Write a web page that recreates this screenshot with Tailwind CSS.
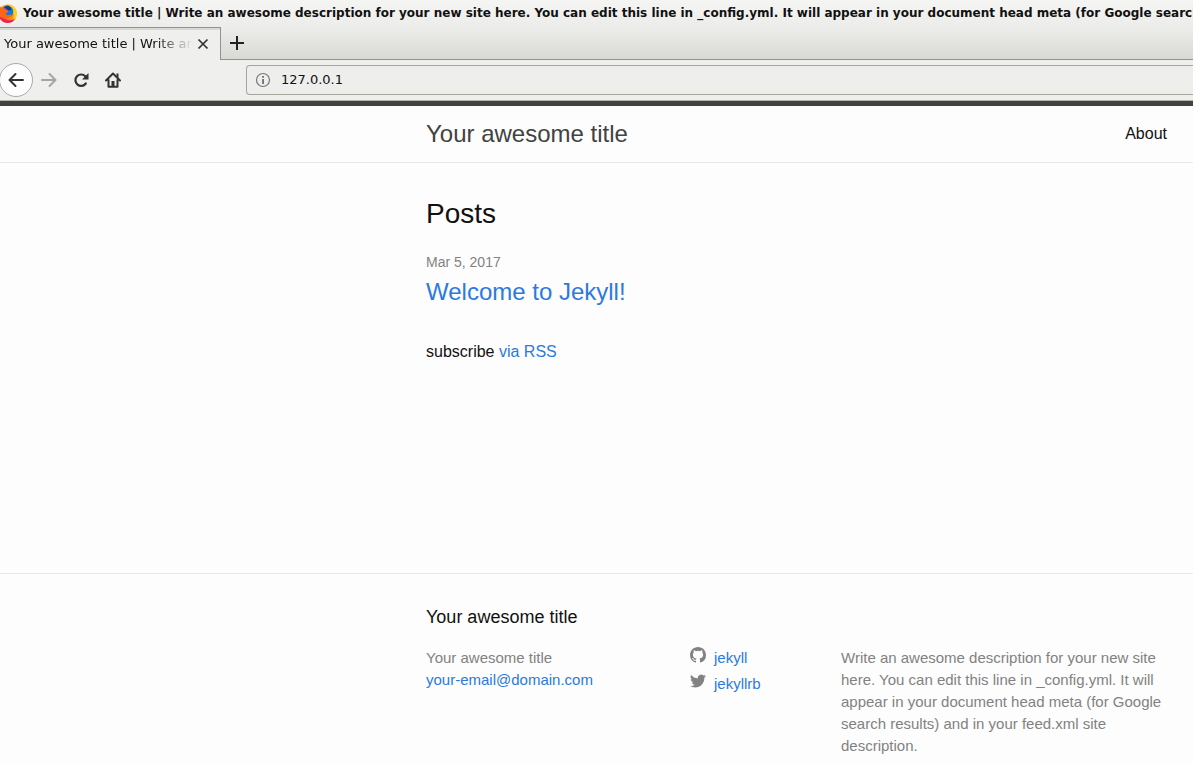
<!DOCTYPE html>
<html lang="en">
<head>
<meta charset="utf-8">
<title>Your awesome title</title>
<script src="https://cdn.jsdelivr.net/npm/@tailwindcss/browser@4"></script>
</head>
<body class="flex min-h-screen flex-col overflow-x-hidden bg-[#fdfdfd] font-['Liberation_Sans',sans-serif] text-base text-[#111]">
<div class="shrink-0 bg-[#efefee] font-['DejaVu_Sans',sans-serif] text-[#111]">
  <div class="bg-linear-to-b from-[#f5f5f4] via-[#ebebe9] to-[#d8d9d3]">
    <div class="flex h-[26px] items-center gap-1 overflow-hidden whitespace-nowrap text-xs font-bold">
      <svg class="-ml-0.5 size-[21px] shrink-0" viewBox="0 0 22 22" aria-hidden="true">
        <circle cx="10" cy="11" r="9.5" fill="#ff8b0c"/>
        <path d="M11 1c5 1 9 5 9 10 0 6-5 10-10 10 6-2 8-8 5-13-1-2-3-4-4-7z" fill="#ffcf22"/>
        <path d="M0 8c0 8 4 13 10 13 4 0 7-2 8-5-5 4-12 2-13-4l-3-8z" fill="#ee2350"/>
        <circle cx="10" cy="9" r="6" fill="#1479dc"/>
        <path d="M9 3c3 0 5 2 5 4l-3 1-2-2-3-1z" fill="#153b89"/>
        <path d="M0 10l1-8 3 4c2-1 4 0 4 1l3 1c0 2-3 2-3 3 1 3 5 1 7 1-2 4-8 6-12 3-2-2-3-3-3-5z" fill="#ff6418"/>
      </svg>
      <span>Your awesome title | Write an awesome description for your new site here. You can edit this line in _config.yml. It will appear in your document head meta (for Google search results)</span>
    </div>
    <div class="flex h-[34px] pt-px">
      <div class="flex w-[221px] items-center border-t border-r border-[#92928f] bg-[#efefee] pl-1 shadow-[inset_0_2px_0_#d9d9d7]">
        <span class="w-[189px] overflow-hidden bg-linear-to-r from-[#111] from-80% to-transparent bg-clip-text text-[13px] whitespace-nowrap text-transparent">Your awesome title | Write an</span>
        <button aria-label="Close tab" class="ml-1"><svg class="size-3" viewBox="0 0 12 12" fill="none" stroke="#333" stroke-width="1.700"><path d="M1.500 1.500l9 9M10.500 1.500l-9 9"/></svg></button>
      </div>
      <div class="flex flex-1 items-center border-b border-[#92928f] pl-2">
        <button aria-label="New tab"><svg class="size-4" viewBox="0 0 16 16" stroke="#222" stroke-width="2"><path d="M8 1v14M1 8h14"/></svg></button>
      </div>
    </div>
  </div>
  <div class="flex h-[41px] items-center border-b border-[#b4b5aa]">
    <button aria-label="Back" class="-ml-px grid size-[34px] shrink-0 place-items-center rounded-full border border-[#a9a9a4] bg-[#fdfdfd]"><svg class="size-4" viewBox="0 0 16 16" fill="none" stroke="#333" stroke-width="2" stroke-linecap="round" stroke-linejoin="round"><path d="M15 8H1.500M7.500 2l-6 6 6 6"/></svg></button>
    <button aria-label="Forward" class="ml-2"><svg class="size-4" viewBox="0 0 16 16" fill="none" stroke="#a5a5a3" stroke-width="2" stroke-linecap="round" stroke-linejoin="round"><path d="M1 8h13.500M8.500 2l6 6-6 6"/></svg></button>
    <button aria-label="Reload" class="ml-4"><svg class="size-4" viewBox="0 0 16 16"><path d="M12.800 11.500A5.700 5.700 0 1 1 12.300 4.300" fill="none" stroke="#333" stroke-width="2.200" stroke-linecap="round"/><path d="M15.500 1v6.500H9z" fill="#333"/></svg></button>
    <button aria-label="Home" class="ml-4"><svg class="size-4" viewBox="0 0 16 16"><path d="M1 8.500l7-7 7 7M3.500 8v6.800h9V8" fill="none" stroke="#333" stroke-width="2" stroke-linecap="round" stroke-linejoin="round"/><path d="M6.500 15V9h3v6zM11.500 1.500h2V6l-2-2z" fill="#333"/></svg></button>
    <div class="ml-[125px] flex h-[30px] flex-1 items-center gap-2.5 rounded-l border border-r-0 border-[#a5a69b] bg-[#eeeeec] pl-2">
      <svg class="size-4 shrink-0" viewBox="0 0 16 16"><circle cx="8" cy="8" r="6.500" fill="none" stroke="#777" stroke-width="1.200"/><path d="M7.200 7h1.700v5H7.200zM7.200 4h1.700v1.700H7.200z" fill="#666"/></svg>
      <input aria-label="Address" value="127.0.0.1" class="min-w-0 flex-1 bg-transparent text-[13px] outline-none">
    </div>
  </div>
</div>
<header class="border-t-[5px] border-b border-t-[#424242] border-b-[#e8e8e8]">
  <div class="ml-[426px] flex h-14 max-w-[741px] items-center justify-between">
    <a href="#" class="text-2xl text-[#424242]">Your awesome title</a>
    <a href="#about" class="text-base">About</a>
  </div>
</header>
<main class="ml-[426px] max-w-[741px] flex-1 pt-[30px]">
  <h1 class="text-[28px] leading-[42px]">Posts</h1>
  <div class="mt-[15px] text-sm leading-6 text-[#828282]">Mar 5, 2017</div>
  <h2 class="text-2xl leading-9"><a href="#welcome" class="text-[#2a7ae2]">Welcome to Jekyll!</a></h2>
  <p class="mt-[30px] leading-6">subscribe <a href="#rss" class="text-[#2a7ae2]">via RSS</a></p>
</main>
<footer class="border-t border-[#e8e8e8] pt-[30px] pb-[7px]">
  <div class="ml-[426px] max-w-[741px]">
    <h2 class="mb-4 text-lg leading-[27px]">Your awesome title</h2>
    <div class="flex text-[15px] leading-[22px] text-[#828282]">
      <div class="w-[264px]">Your awesome title<br><a href="mailto:your-email@domain.com" class="text-[#2a7ae2]">your-email@domain.com</a></div>
      <ul class="flex w-[151px] flex-col gap-1">
        <li><a href="#github" class="flex gap-2 text-[#2a7ae2]"><svg class="size-4" viewBox="0 0 16 16" fill="#828282"><path d="M8 0C3.580 0 0 3.580 0 8c0 3.540 2.290 6.530 5.470 7.590.4.070.55-.17.55-.38 0-.19-.01-.82-.01-1.490-2.010.37-2.530-.49-2.690-.94-.09-.23-.48-.94-.82-1.130-.28-.15-.68-.52-.01-.53.63-.01 1.080.58 1.230.82.72 1.210 1.870.87 2.330.66.07-.52.28-.87.51-1.070-1.780-.2-3.640-.89-3.640-3.950 0-.87.31-1.590.82-2.150-.08-.2-.36-1.020.08-2.120 0 0 .67-.21 2.200.82a7.600 7.600 0 0 1 4 0c1.530-1.040 2.200-.82 2.200-.82.44 1.100.16 1.920.08 2.120.51.56.82 1.270.82 2.150 0 3.070-1.870 3.750-3.650 3.950.29.25.54.73.54 1.480 0 1.070-.01 1.930-.01 2.200 0 .21.15.46.55.38A8 8 0 0 0 16 8c0-4.420-3.580-8-8-8z"/></svg>jekyll</a></li>
        <li><a href="#twitter" class="flex gap-2 text-[#2a7ae2]"><svg class="size-4" viewBox="0 0 16 16" fill="#828282"><path d="M15.969 3.058c-.586.260-1.217.436-1.878.515.675-.405 1.194-1.045 1.438-1.809-.632.375-1.332.647-2.076.793A3.270 3.270 0 0 0 7.880 5.539C5.163 5.403 2.753 4.102 1.140 2.124a3.270 3.270 0 0 0 1.011 4.364 3.250 3.250 0 0 1-1.481-.409v.041a3.270 3.270 0 0 0 2.622 3.205 3.300 3.300 0 0 1-1.476.056 3.270 3.270 0 0 0 3.053 2.269A6.560 6.560 0 0 1 .03 13.004a9.230 9.230 0 0 0 5.010 1.469c6.010 0 9.298-4.980 9.298-9.298l-.011-.423a6.600 6.600 0 0 0 1.642-1.694z"/></svg>jekyllrb</a></li>
      </ul>
      <p class="flex-1">Write an awesome description for your new site here. You can edit this line in _config.yml. It will appear in your document head meta (for Google search results) and in your feed.xml site description.</p>
    </div>
  </div>
</footer>
</body>
</html>
